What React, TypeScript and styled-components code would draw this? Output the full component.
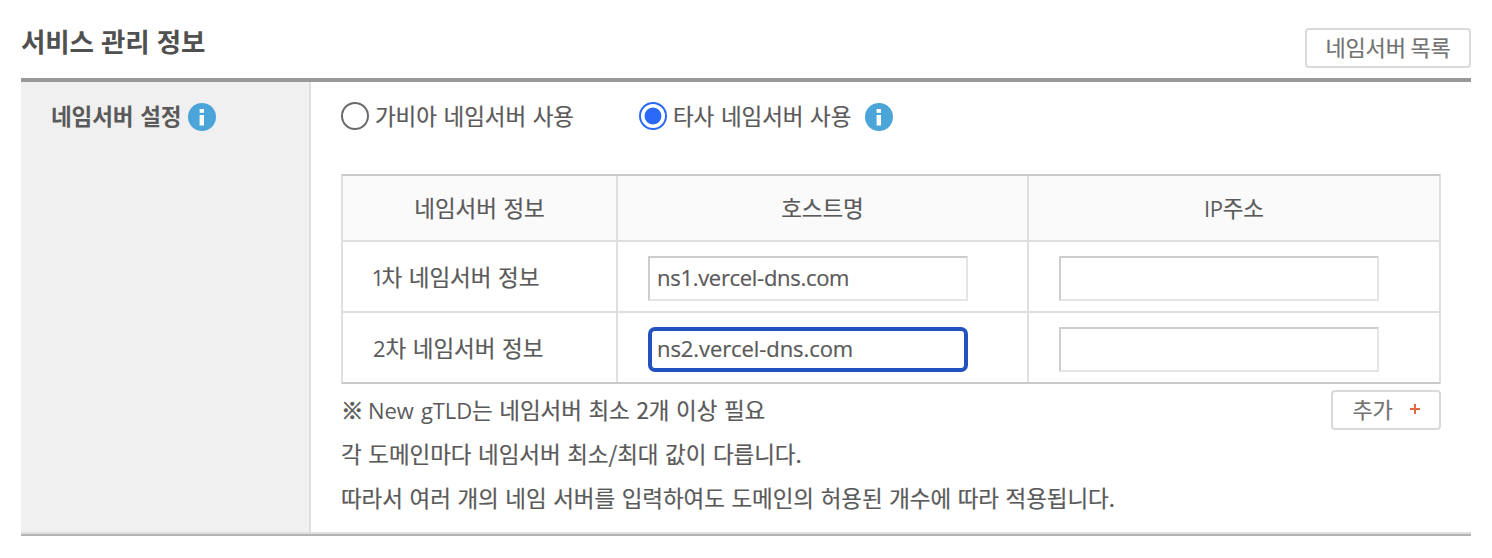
import React, { useState } from 'react';
import styled, { createGlobalStyle, css } from 'styled-components';

const GlobalStyle = createGlobalStyle`
  * { box-sizing: border-box; }
  body {
    margin: 0;
    background: #fff;
    color: #5a5a5a;
    font-family: "Noto Sans CJK KR", sans-serif;
    font-size: 22.5px;
    line-height: 44px;
    letter-spacing: -0.08px;
    word-spacing: 1.7px;
    -webkit-text-stroke: 0.2px currentColor;
  }
`;

const Page = styled.main`
  width: 1492px;
  height: 558px;
  padding: 0 21px;
  overflow: hidden;
`;

const Header = styled.header`
  display: flex;
  justify-content: space-between;
  align-items: flex-start;
  height: 78px;
`;

const Title = styled.h2`
  margin: 19px 0 0;
  font-size: 26.5px;
  line-height: 44px;
  font-weight: 700;
  color: #505050;
  letter-spacing: -0.1px;
  word-spacing: 1.3px;
  -webkit-text-stroke: 0;
`;

const SmallButton = styled.button<{ $width: number; $top: number; $gap?: number }>`
  display: flex;
  align-items: flex-start;
  justify-content: center;
  gap: ${(p) => p.$gap ?? 0}px;
  width: ${(p) => p.$width}px;
  height: 40px;
  margin: ${(p) => p.$top}px 0 0;
  padding: 0;
  border: 2px solid #d9d9d9;
  border-radius: 4px;
  background: #fff;
  color: #737373;
  font: inherit;
  font-size: 22px;
  letter-spacing: -0.2px;
  word-spacing: 0;
  line-height: 33px;
`;

const Settings = styled.section`
  display: flex;
  height: 458px;
  border-top: 4px solid #999;
  border-bottom: 2px solid #b3b3b3;
`;

const SideCell = styled.div`
  display: flex;
  align-items: flex-start;
  width: 290px;
  padding: 12px 0 0 30px;
  border-right: 2px solid #dfdfdf;
  border-bottom: 2px solid #dfdfdf;
  background: #f0f0f0;
  font-weight: 700;
  line-height: 42px;
  -webkit-text-stroke: 0;
`;

const Body = styled.div`
  flex: 1;
  padding: 12px 30px 0;
  border-bottom: 2px solid #dfdfdf;
`;

const InfoSvg = styled.svg<{ $left: number }>`
  width: 28px;
  height: 28px;
  margin: 9px 0 0 ${(p) => p.$left}px;
  flex: none;
`;

const RadioRow = styled.div`
  display: flex;
  height: 80px;
  line-height: 42px;
`;

const RadioLabel = styled.label<{ $width?: number }>`
  display: flex;
  width: ${(p) => (p.$width ? `${p.$width}px` : 'auto')};
  white-space: nowrap;
`;

const Radio = styled.input`
  appearance: none;
  width: 28px;
  height: 28px;
  margin: 8px 6px 0 0;
  border: 2px solid #6b6b6b;
  border-radius: 50%;
  background: #fff;
  flex: none;
  &:checked {
    border-color: #2b6af9;
    background: radial-gradient(circle, #2b6af9 8px, #fff 8.8px);
  }
`;

const Table = styled.div`
  border: 2px solid #dfdfdf;
  border-top-color: #c9c9c9;
  border-bottom-color: #c9c9c9;
`;

const Row = styled.div<{ $head?: boolean }>`
  display: grid;
  grid-template-columns: 275px 411px 1fr;
  height: 71px;
  border-bottom: 2px solid #dfdfdf;
  &:last-child { height: 69px; border-bottom: 0; }
  ${(p) =>
    p.$head &&
    css`
      height: 66px;
      background: #fafafa;
      text-align: center;
    `}
`;

const Cell = styled.div`
  padding: 14px 30px 0;
  white-space: nowrap;
  border-right: 2px solid #dfdfdf;
  &:last-child { border-right: 0; }
`;

const HeadCell = styled(Cell)`
  padding: 9px 0 0;
`;

const LabelCell = styled(Cell)`
  padding-top: 12px;
`;

const Latin = styled.span<{ $spacing?: number; $shift?: number }>`
  margin-left: ${(p) => p.$shift ?? 0}px;
  font-family: "Open Sans", sans-serif;
  font-size: 22px;
  line-height: 1;
  letter-spacing: ${(p) => p.$spacing ?? -0.1}px;
  -webkit-text-stroke: 0;
`;

const Mark = styled.span`
  letter-spacing: -2.2px;
  -webkit-text-stroke: 0.6px currentColor;
`;

const TextField = styled.input<{ $active?: boolean }>`
  display: block;
  width: 320px;
  height: 45px;
  padding: 0 7px 4px;
  border: 2px solid;
  border-color: #cdcdcd #e5e5e5 #e5e5e5 #cdcdcd;
  outline: none;
  background: #fff;
  color: inherit;
  font: 22px "Open Sans", sans-serif;
  letter-spacing: -0.3px;
  -webkit-text-stroke: 0.2px currentColor;
  ${(p) =>
    p.$active &&
    css`
      border: 4px solid #2352c0;
      border-radius: 7px;
      padding: 0 5px 4px;
      letter-spacing: -0.08px;
    `}
`;

const Footer = styled.div`
  display: flex;
  justify-content: space-between;
  padding-top: 3px;
`;

const Note = styled.p`
  margin: 0;
  height: 44px;
  white-space: nowrap;
`;

const PlusSvg = styled.svg`
  width: 10px;
  height: 10px;
  margin-top: 12px;
`;

const InfoIcon = ({ left }: { left: number }) => (
  <InfoSvg $left={left} viewBox="0 0 28 28">
    <circle cx="14" cy="14" r="14" fill="#4ba5d8" />
    <rect x="11.6" y="6" width="4.4" height="3.8" fill="#fff" />
    <rect x="11.6" y="12" width="4.4" height="10.5" fill="#fff" />
  </InfoSvg>
);

const initialHosts = ['ns1.vercel-dns.com', 'ns2.vercel-dns.com'];

export default function App() {
  const [mode, setMode] = useState('other');
  const [hosts, setHosts] = useState(initialHosts);

  const updateHost = (index: number, value: string) =>
    setHosts(hosts.map((host, i) => (i === index ? value : host)));

  return (
    <Page>
      <GlobalStyle />
      <Header>
        <Title>서비스 관리 정보</Title>
        <SmallButton $width={166} $top={28}>네임서버 목록</SmallButton>
      </Header>
      <Settings>
        <SideCell>
          네임서버 설정
          <InfoIcon left={7} />
        </SideCell>
        <Body>
          <RadioRow>
            <RadioLabel $width={298}>
              <Radio type="radio" name="ns" checked={mode === 'gabia'} onChange={() => setMode('gabia')} />
              가비아 네임서버 사용
            </RadioLabel>
            <RadioLabel>
              <Radio type="radio" name="ns" checked={mode === 'other'} onChange={() => setMode('other')} />
              타사 네임서버 사용
            </RadioLabel>
            <InfoIcon left={14} />
          </RadioRow>
          <Table>
            <Row $head>
              <HeadCell>네임서버 정보</HeadCell>
              <HeadCell>호스트명</HeadCell>
              <HeadCell><Latin $spacing={-0.4}>IP</Latin>주소</HeadCell>
            </Row>
            {hosts.map((host, i) => (
              <Row key={i}>
                <LabelCell>
                  <Latin $spacing={i === 0 ? -2.4 : 0} $shift={i === 0 ? -1.6 : 0}>{i + 1}</Latin>차 네임서버 정보
                </LabelCell>
                <Cell>
                  <TextField $active={i === 1} value={host} onChange={(e) => updateHost(i, e.target.value)} />
                </Cell>
                <Cell>
                  <TextField />
                </Cell>
              </Row>
            ))}
          </Table>
          <Footer>
            <div>
              <Note><Mark>※</Mark> <Latin>New gTLD</Latin>는 네임서버 최소 2개 이상 필요</Note>
              <Note>각 도메인마다 네임서버 최소/최대 값이 다릅니다.</Note>
              <Note>따라서 여러 개의 네임 서버를 입력하여도 도메인의 허용된 개수에 따라 적용됩니다.</Note>
            </div>
            <SmallButton $width={110} $top={3} $gap={17}>
              추가
              <PlusSvg viewBox="0 0 10 10">
                <path d="M5 0v10M0 5h10" stroke="#e0693f" strokeWidth="2" />
              </PlusSvg>
            </SmallButton>
          </Footer>
        </Body>
      </Settings>
    </Page>
  );
}
